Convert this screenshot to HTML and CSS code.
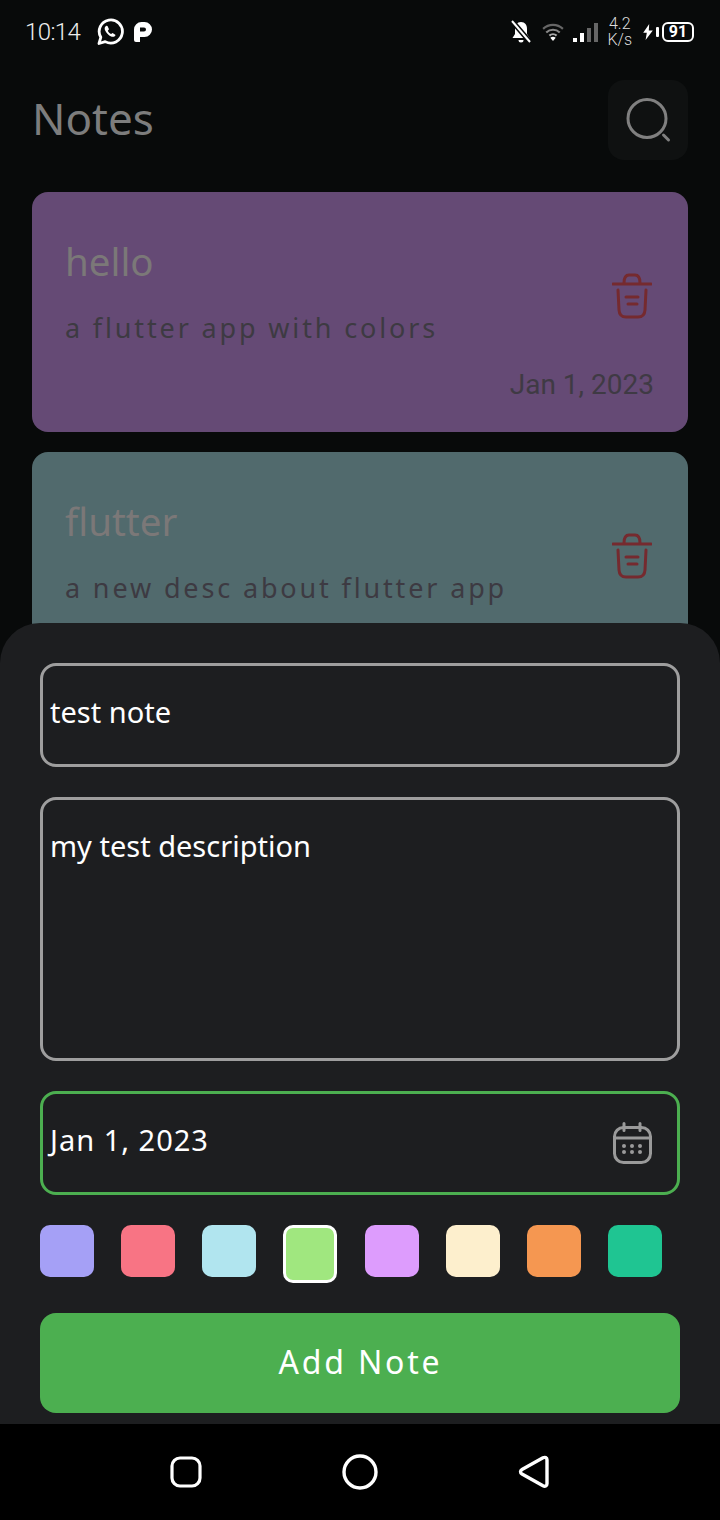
FILE: index.html
```html
<!DOCTYPE html>
<html lang="en">
<head>
  <meta charset="UTF-8" />
  <title>Notes</title>
  <link rel="stylesheet" href="styles.css">
</head>
<body>
  <div class="screen">
    <div class="status">
      <div class="status-left">
        <span class="time">10:14</span>
        <svg class="wa" width="28" height="28" viewBox="0 0 28 28" fill="none">
          <path d="M3 25.500l1.800-6.200a11.600 11.600 0 1 1 4.400 4.300z" stroke="#fff" stroke-width="2.800" stroke-linejoin="round"/>
          <path d="M10.200 7.800c-1.600 1-2 2.800-.9 5 1.200 2.600 3.200 4.500 5.800 5.600 2 .8 3.800.2 4.500-1.500l-3-2-1.500 1.200c-1.400-.6-2.700-2-3.300-3.400l1.200-1.400-1.500-3.400z" fill="#fff"/>
        </svg>
        <svg width="18" height="20" viewBox="0 0 18 20"><path fill-rule="evenodd" d="M0 7.500A7.500 7.500 0 0 1 7.500 0h3a7.500 7.500 0 0 1 0 15H6v5H2a2 2 0 0 1-2-2zM6 5.500v4h4a2 2 0 0 0 0-4z" fill="#fff"/></svg>
      </div>
      <div class="status-right">
        <svg width="22" height="26" viewBox="0 0 22 26" fill="none">
          <path d="M11 3c4 0 6 3 6 7v5l2.500 4h-17L5 15v-5c0-4 2-7 6-7z" fill="#fff"/>
          <path d="M8.500 21a2.500 2.500 0 0 0 5 0z" fill="#fff"/>
          <path d="M2 2l18 21" stroke="#080a0a" stroke-width="5"/>
          <path d="M2 2l18 21" stroke="#fff" stroke-width="2"/>
        </svg>
        <svg class="wifi" width="22" height="18" viewBox="0 0 24 20" fill="none">
          <path d="M1 6.500a16 16 0 0 1 22 0" stroke="#666" stroke-width="2.400"/>
          <path d="M4.500 10.500a11 11 0 0 1 15 0" stroke="#888" stroke-width="2.400"/>
          <path d="M8 14a6 6 0 0 1 8 0" stroke="#aaa" stroke-width="2.400"/>
          <path d="M12 20l-3-3.500a4.500 4.500 0 0 1 6 0z" fill="#fff"/>
        </svg>
        <div class="signal">
          <i class="bar bar-1"></i><i class="bar bar-2"></i><i class="bar bar-3"></i><i class="bar bar-4"></i>
        </div>
        <div class="speed"><span>4.2</span><span>K/s</span></div>
        <svg class="bolt" width="10" height="16" viewBox="0 0 12 20"><path d="M7.500 0L0 11h4.500L3 20l9-12H7z" fill="#fff"/></svg>
        <i class="batt-nub"></i>
        <div class="battery">91</div>
      </div>
    </div>

    <header class="top">
      <h1>Notes</h1>
      <button class="search">
        <svg width="48" height="48" viewBox="0 0 48 48" fill="none">
          <circle cx="23" cy="22.500" r="19" stroke="#808080" stroke-width="3"/>
          <path d="M39.500 39l5 5" stroke="#808080" stroke-width="3" stroke-linecap="round"/>
        </svg>
      </button>
    </header>

    <main class="notes">
      <article class="note note-purple">
        <div class="note-body">
          <h2>hello</h2>
          <p>a flutter app with colors</p>
        </div>
        <svg class="trash" width="40" height="46" viewBox="0 0 40 46" fill="none">
          <path d="M1 11h38M12 10c0-5 2-8 5-8h6c3 0 5 3 5 8M6 17l1 20c.3 5 3 7 7 7h12c4 0 6.700-2 7-7l1-20M14 24h12M16 31h9" stroke="#752a2f" stroke-width="3" stroke-linecap="round"/>
        </svg>
        <time>Jan 1, 2023</time>
      </article>
      <article class="note note-teal">
        <div class="note-body">
          <h2>flutter</h2>
          <p>a new desc about flutter app</p>
        </div>
        <svg class="trash" width="40" height="46" viewBox="0 0 40 46" fill="none">
          <path d="M1 11h38M12 10c0-5 2-8 5-8h6c3 0 5 3 5 8M6 17l1 20c.3 5 3 7 7 7h12c4 0 6.700-2 7-7l1-20M14 24h12M16 31h9" stroke="#752a2f" stroke-width="3" stroke-linecap="round"/>
        </svg>
      </article>
    </main>

    <section class="sheet">
      <div class="field field-title">test note</div>
      <div class="field field-desc">my test description</div>
      <div class="field field-date">
        <span>Jan 1, 2023</span>
        <svg width="40" height="44" viewBox="0 0 40 44" fill="none">
          <rect x="2.500" y="6.500" width="36" height="35" rx="9" stroke="#9a9a9a" stroke-width="3"/>
          <path d="M2.500 17h36M12 2.500v7M28 2.500v7" stroke="#9a9a9a" stroke-width="3" stroke-linecap="round"/>
          <g fill="#9a9a9a">
            <circle cx="12" cy="25" r="2"/><circle cx="20" cy="25" r="2"/><circle cx="28" cy="25" r="2"/>
            <circle cx="12" cy="31" r="2"/><circle cx="20" cy="31" r="2"/><circle cx="28" cy="31" r="2"/>
          </g>
        </svg>
      </div>
      <div class="swatches">
        <i class="swatch c1"></i>
        <i class="swatch c2"></i>
        <i class="swatch c3"></i>
        <i class="swatch c4 selected"></i>
        <i class="swatch c5"></i>
        <i class="swatch c6"></i>
        <i class="swatch c7"></i>
        <i class="swatch c8"></i>
      </div>
      <button class="add">Add Note</button>
    </section>

    <nav class="navbar">
      <svg width="32" height="32" viewBox="0 0 32 32" fill="none"><rect x="2" y="2" width="28" height="28" rx="8" stroke="#fff" stroke-width="3.200"/></svg>
      <svg width="36" height="36" viewBox="0 0 36 36" fill="none"><circle cx="18" cy="18" r="16" stroke="#fff" stroke-width="3.400"/></svg>
      <svg width="32" height="34" viewBox="0 0 32 34" fill="none"><path d="M4 14.500L25 2.800c2-1 4-.2 4 2v24c0 2.200-2 3-4 2L4 19c-2-1.200-2-3.300 0-4.500z" stroke="#fff" stroke-width="3.400" stroke-linejoin="round"/></svg>
    </nav>
  </div>
</body>
</html>
```
FILE: styles.css
```css
* {
  box-sizing: border-box;
}
body {
  margin: 0;
  background: #080a0a;
  font-family: "Noto Sans", "Open Sans", sans-serif;
}
.screen {
  position: relative;
  width: 720px;
  height: 1520px;
  overflow: hidden;
  background: #080a0a;
}

/* status bar */
.status {
  height: 64px;
  padding: 0 26px 0 25px;
  display: flex;
  align-items: center;
  justify-content: space-between;
  color: #fff;
}
.status-left {
  display: flex;
  align-items: center;
}
.time {
  width: 71px;
  font-family: "Roboto", sans-serif;
  font-weight: 300;
  font-size: 24px;
  letter-spacing: -0.6px;
  color: #eee;
}
.wa {
  margin-right: 10px;
}
.status-right {
  display: flex;
  align-items: center;
}
.wifi {
  margin-left: 10px;
}
.signal {
  display: flex;
  align-items: flex-end;
  gap: 3px;
  height: 20px;
  margin-left: 9px;
}
.bar {
  width: 4px;
  background: #fff;
}
.bar-1 { height: 4px; }
.bar-2 { height: 9px; }
.bar-3 { height: 14px; background: #666; }
.bar-4 { height: 19px; background: #666; }
.speed {
  display: flex;
  flex-direction: column;
  align-items: center;
  margin-left: 9px;
  font-family: "Roboto", sans-serif;
  font-weight: 300;
  font-size: 16px;
  line-height: 16px;
  color: #ddd;
}
.bolt {
  margin-left: 11px;
}
.batt-nub {
  width: 3px;
  height: 10px;
  margin-left: 3px;
  background: #fff;
  border-radius: 1px;
}
.battery {
  width: 32px;
  height: 20px;
  margin-left: 3px;
  border: 2px solid #fff;
  border-radius: 6px;
  font-family: "Roboto", sans-serif;
  font-weight: 700;
  font-size: 16px;
  line-height: 16px;
  text-align: center;
}

/* header */
.top {
  height: 112px;
  padding: 16px 32px 0 32px;
  display: flex;
  align-items: flex-start;
  justify-content: space-between;
}
h1 {
  margin: 8px 0 0;
  font-weight: 400;
  font-size: 44px;
  line-height: 60px;
  color: #7d7d7d;
}
.search {
  width: 80px;
  height: 80px;
  padding: 0;
  border: 0;
  border-radius: 16px;
  background: #0f1111;
  display: flex;
  align-items: center;
  justify-content: center;
}

/* note cards */
.notes {
  padding: 16px 32px 0;
}
.note {
  position: relative;
  height: 240px;
  margin-bottom: 20px;
  padding: 43px 36px 0 33px;
  border-radius: 16px;
  display: flex;
  justify-content: space-between;
}
.note-purple { background: #654a75; }
.note-teal { background: #516a6d; }
.note h2 {
  margin: 0;
  font-weight: 400;
  font-size: 38.500px;
  line-height: 52px;
  color: #7b7878;
}
.note p {
  margin: 22px 0 0;
  font-size: 27px;
  line-height: 38px;
  letter-spacing: 2.850px;
  color: #3d3a42;
}
.trash {
  margin-top: 38px;
}
.note time {
  position: absolute;
  right: 34px;
  bottom: 30px;
  font-family: "Roboto", sans-serif;
  font-size: 28px;
  line-height: 34px;
  color: #3f3a44;
}

/* bottom sheet */
.sheet {
  position: absolute;
  left: 0;
  right: 0;
  top: 623px;
  height: 801px;
  padding: 40px 40px 0;
  border-radius: 40px 40px 0 0;
  background: #1d1e20;
  display: flex;
  flex-direction: column;
  gap: 30px;
}
.field {
  padding: 26px 7px 0;
  border: 3px solid #9e9e9e;
  border-radius: 16px;
  font-size: 29px;
  line-height: 40px;
  color: #fff;
}
.field-title { height: 104px; }
.field-desc { height: 264px; }
.field-date {
  height: 104px;
  padding-right: 25px;
  border-color: #4caf50;
  display: flex;
  justify-content: space-between;
  letter-spacing: 1px;
}
.field-date svg {
  margin-top: 1px;
}
.swatches {
  height: 58px;
  display: flex;
  align-items: flex-start;
  gap: 27.140px;
}
.swatch {
  width: 54px;
  height: 52px;
  border-radius: 10px;
}
.swatch.selected {
  height: 58px;
  border: 3px solid #fff;
}
.c1 { background: #a5a0f6; }
.c2 { background: #f87484; }
.c3 { background: #b1e5ef; }
.c4 { background: #a0e77f; }
.c5 { background: #dd9cfd; }
.c6 { background: #fdefcd; }
.c7 { background: #f59751; }
.c8 { background: #1fc592; }
.add {
  height: 100px;
  padding: 0 0 3px 1px;
  border: 0;
  border-radius: 16px;
  background: #4caf50;
  color: #fff;
  font-family: inherit;
  font-size: 32px;
  letter-spacing: 2.800px;
}

/* nav bar */
.navbar {
  position: absolute;
  left: 0;
  right: 0;
  bottom: 0;
  height: 96px;
  background: #000;
  padding-left: 170px;
  display: flex;
  align-items: center;
  gap: 140px;
}
```
